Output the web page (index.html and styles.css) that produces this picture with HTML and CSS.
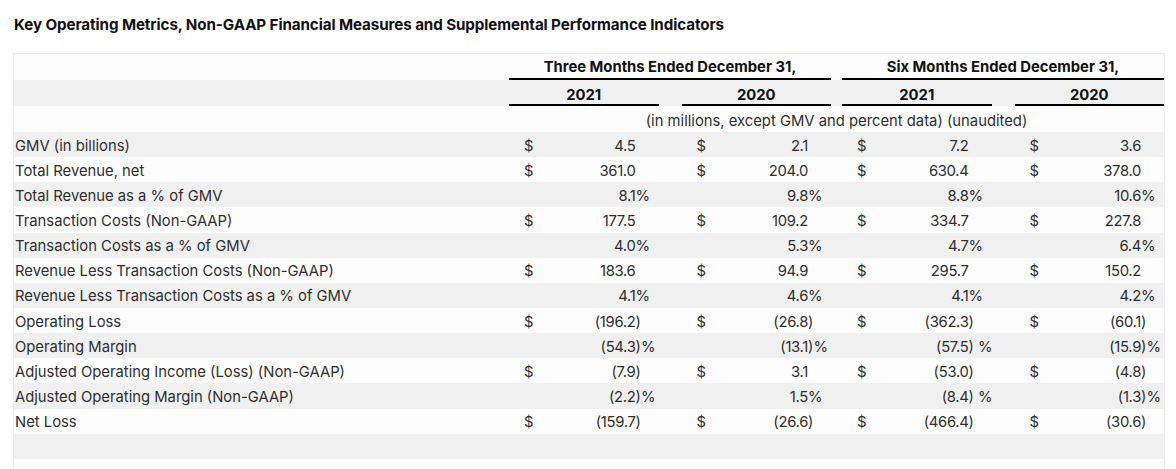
FILE: index.html
```html
<!DOCTYPE html>
<html lang="en">
<head>
<meta charset="utf-8">
<title>Key Operating Metrics</title>
<link rel="stylesheet" href="styles.css">
</head>
<body>
<div class="page">
  <h2 class="title">Key Operating Metrics, Non-GAAP Financial Measures and Supplemental Performance Indicators</h2>
  <table class="metrics">
    <colgroup>
      <col class="c-label">
      <col class="c-year">
      <col class="c-gap">
      <col class="c-year">
      <col class="c-gap-sm">
      <col class="c-year">
      <col class="c-gap">
      <col class="c-year">
    </colgroup>
    <tbody>
      <tr class="hdr">
        <td></td>
        <td colspan="3" class="grp">Three Months Ended December 31,</td>
        <td></td>
        <td colspan="3" class="grp">Six Months Ended December 31,</td>
      </tr>
      <tr class="hdr alt">
        <td></td>
        <td class="yr">2021</td>
        <td></td>
        <td class="yr">2020</td>
        <td></td>
        <td class="yr">2021</td>
        <td></td>
        <td class="yr">2020</td>
      </tr>
      <tr class="hdr">
        <td></td>
        <td colspan="7" class="note-cell">(in millions, except GMV and percent data) (unaudited)</td>
      </tr>

      <tr class="alt">
        <td class="label">GMV (in billions)</td>
        <td><div class="v"><span class="cur">$</span><span class="n">4.5</span><span class="s"></span></div></td><td></td>
        <td><div class="v"><span class="cur">$</span><span class="n">2.1</span><span class="s"></span></div></td><td></td>
        <td><div class="v"><span class="cur">$</span><span class="n">7.2</span><span class="s"></span></div></td><td></td>
        <td><div class="v"><span class="cur">$</span><span class="n">3.6</span><span class="s"></span></div></td>
      </tr>
      <tr>
        <td class="label">Total Revenue, net</td>
        <td><div class="v"><span class="cur">$</span><span class="n">361.0</span><span class="s"></span></div></td><td></td>
        <td><div class="v"><span class="cur">$</span><span class="n">204.0</span><span class="s"></span></div></td><td></td>
        <td><div class="v"><span class="cur">$</span><span class="n">630.4</span><span class="s"></span></div></td><td></td>
        <td><div class="v"><span class="cur">$</span><span class="n">378.0</span><span class="s"></span></div></td>
      </tr>
      <tr class="alt">
        <td class="label">Total Revenue as a % of GMV</td>
        <td><div class="v"><span class="cur"></span><span class="n">8.1</span><span class="s">%</span></div></td><td></td>
        <td><div class="v"><span class="cur"></span><span class="n">9.8</span><span class="s">%</span></div></td><td></td>
        <td><div class="v"><span class="cur"></span><span class="n">8.8</span><span class="s">%</span></div></td><td></td>
        <td><div class="v"><span class="cur"></span><span class="n">10.6</span><span class="s">%</span></div></td>
      </tr>
      <tr>
        <td class="label">Transaction Costs (Non-GAAP)</td>
        <td><div class="v"><span class="cur">$</span><span class="n">177.5</span><span class="s"></span></div></td><td></td>
        <td><div class="v"><span class="cur">$</span><span class="n">109.2</span><span class="s"></span></div></td><td></td>
        <td><div class="v"><span class="cur">$</span><span class="n">334.7</span><span class="s"></span></div></td><td></td>
        <td><div class="v"><span class="cur">$</span><span class="n">227.8</span><span class="s"></span></div></td>
      </tr>
      <tr class="alt">
        <td class="label">Transaction Costs as a % of GMV</td>
        <td><div class="v"><span class="cur"></span><span class="n">4.0</span><span class="s">%</span></div></td><td></td>
        <td><div class="v"><span class="cur"></span><span class="n">5.3</span><span class="s">%</span></div></td><td></td>
        <td><div class="v"><span class="cur"></span><span class="n">4.7</span><span class="s">%</span></div></td><td></td>
        <td><div class="v"><span class="cur"></span><span class="n">6.4</span><span class="s">%</span></div></td>
      </tr>
      <tr>
        <td class="label">Revenue Less Transaction Costs (Non-GAAP)</td>
        <td><div class="v"><span class="cur">$</span><span class="n">183.6</span><span class="s"></span></div></td><td></td>
        <td><div class="v"><span class="cur">$</span><span class="n">94.9</span><span class="s"></span></div></td><td></td>
        <td><div class="v"><span class="cur">$</span><span class="n">295.7</span><span class="s"></span></div></td><td></td>
        <td><div class="v"><span class="cur">$</span><span class="n">150.2</span><span class="s"></span></div></td>
      </tr>
      <tr class="alt">
        <td class="label">Revenue Less Transaction Costs as a % of GMV</td>
        <td><div class="v"><span class="cur"></span><span class="n">4.1</span><span class="s">%</span></div></td><td></td>
        <td><div class="v"><span class="cur"></span><span class="n">4.6</span><span class="s">%</span></div></td><td></td>
        <td><div class="v"><span class="cur"></span><span class="n">4.1</span><span class="s">%</span></div></td><td></td>
        <td><div class="v"><span class="cur"></span><span class="n">4.2</span><span class="s">%</span></div></td>
      </tr>
      <tr>
        <td class="label">Operating Loss</td>
        <td><div class="v"><span class="cur">$</span><span class="n">(196.2</span><span class="s">)</span></div></td><td></td>
        <td><div class="v"><span class="cur">$</span><span class="n">(26.8</span><span class="s">)</span></div></td><td></td>
        <td><div class="v"><span class="cur">$</span><span class="n">(362.3</span><span class="s">)</span></div></td><td></td>
        <td><div class="v"><span class="cur">$</span><span class="n">(60.1</span><span class="s">)</span></div></td>
      </tr>
      <tr class="alt">
        <td class="label">Operating Margin</td>
        <td><div class="v"><span class="cur"></span><span class="n">(54.3</span><span class="s">)%</span></div></td><td></td>
        <td><div class="v"><span class="cur"></span><span class="n">(13.1</span><span class="s">)%</span></div></td><td></td>
        <td><div class="v"><span class="cur"></span><span class="n">(57.5</span><span class="s">) %</span></div></td><td></td>
        <td><div class="v"><span class="cur"></span><span class="n">(15.9</span><span class="s">)%</span></div></td>
      </tr>
      <tr>
        <td class="label">Adjusted Operating Income (Loss) (Non-GAAP)</td>
        <td><div class="v"><span class="cur">$</span><span class="n">(7.9</span><span class="s">)</span></div></td><td></td>
        <td><div class="v"><span class="cur">$</span><span class="n">3.1</span><span class="s"></span></div></td><td></td>
        <td><div class="v"><span class="cur">$</span><span class="n">(53.0</span><span class="s">)</span></div></td><td></td>
        <td><div class="v"><span class="cur">$</span><span class="n">(4.8</span><span class="s">)</span></div></td>
      </tr>
      <tr class="alt">
        <td class="label">Adjusted Operating Margin (Non-GAAP)</td>
        <td><div class="v"><span class="cur"></span><span class="n">(2.2</span><span class="s">)%</span></div></td><td></td>
        <td><div class="v"><span class="cur"></span><span class="n">1.5</span><span class="s">%</span></div></td><td></td>
        <td><div class="v"><span class="cur"></span><span class="n">(8.4</span><span class="s">) %</span></div></td><td></td>
        <td><div class="v"><span class="cur"></span><span class="n">(1.3</span><span class="s">)%</span></div></td>
      </tr>
      <tr>
        <td class="label">Net Loss</td>
        <td><div class="v"><span class="cur">$</span><span class="n">(159.7</span><span class="s">)</span></div></td><td></td>
        <td><div class="v"><span class="cur">$</span><span class="n">(26.6</span><span class="s">)</span></div></td><td></td>
        <td><div class="v"><span class="cur">$</span><span class="n">(466.4</span><span class="s">)</span></div></td><td></td>
        <td><div class="v"><span class="cur">$</span><span class="n">(30.6</span><span class="s">)</span></div></td>
      </tr>
      <tr class="alt">
        <td></td><td></td><td></td><td></td><td></td><td></td><td></td><td></td>
      </tr>
      <tr>
        <td></td><td></td><td></td><td></td><td></td><td></td><td></td><td></td>
      </tr>
    </tbody>
  </table>
</div>
</body>
</html>
```

FILE: styles.css
```css
html, body {
  margin: 0;
  padding: 0;
  background: #ffffff;
}

.page {
  padding: 16px 12px 0 13px;
  font-family: "Inter", "Roboto", "Liberation Sans", sans-serif;
  color: #2e2e2e;
}

.title {
  margin: 0 0 19px 1px;
  font-size: 15.2px;
  line-height: 18px;
  font-weight: 700;
  color: #111111;
  letter-spacing: -0.1px;
}

.metrics {
  width: 1152px;
  border-collapse: separate;
  border-spacing: 0;
  border: 1px solid #ececec;
  border-bottom: none;
  table-layout: fixed;
  font-size: 14.8px;
  line-height: 17px;
}

.c-label { width: 495px; }
.c-year { width: 149.5px; }
.c-gap { width: 23px; }
.c-gap-sm { width: 11px; }

.metrics tr {
  height: 25.15px;
}

.metrics tr.hdr {
  height: 26px;
}

.metrics td {
  padding: 3px 0 0 0;
  white-space: nowrap;
  vertical-align: middle;
  background: #fdfdfd;
}

.metrics tr.alt td {
  background: #f0f0f0;
}

.metrics td.grp {
  padding-top: 3px;
  text-align: center;
  font-weight: 700;
  color: #111111;
  border-bottom: 2px solid #000000;
}

.metrics td.yr {
  padding-top: 6px;
  text-align: center;
  font-weight: 700;
  color: #111111;
  border-bottom: 2px solid #000000;
}

.metrics td.note-cell {
  padding-top: 5px;
  text-align: center;
}

.metrics td.label {
  padding-left: 1px;
}

.v {
  display: flex;
  align-items: baseline;
  padding-left: 15px;
}

.cur {
  width: 14px;
  flex: none;
}

.n {
  flex: 1;
  text-align: right;
  letter-spacing: -0.3px;
}

.s {
  width: 23px;
  flex: none;
  text-align: left;
  white-space: pre;
}
```
